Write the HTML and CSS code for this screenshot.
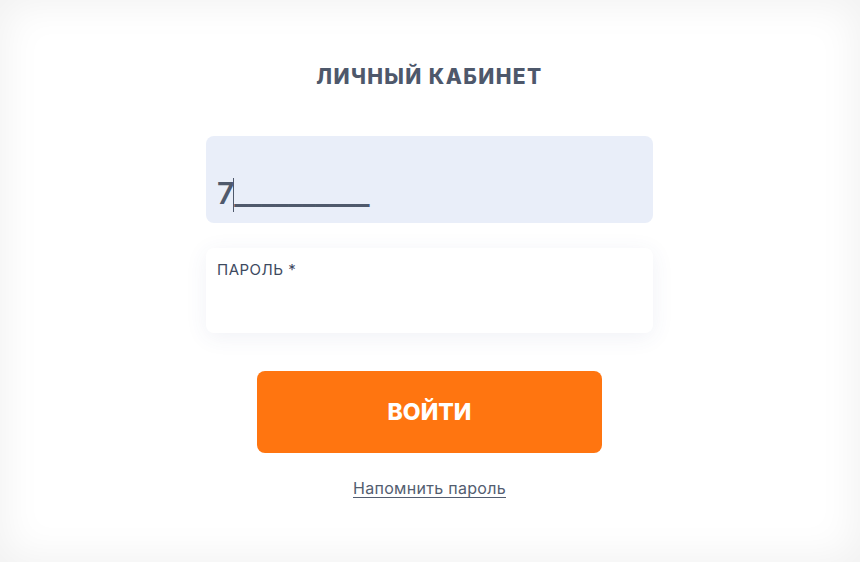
FILE: index.html
```html
<!DOCTYPE html>
<html lang="ru">
<head>
<meta charset="utf-8">
<title>Личный кабинет</title>
<link rel="stylesheet" href="styles.css">
</head>
<body>
<div class="page">
  <form class="card">
    <h1 class="title">ЛИЧНЫЙ КАБИНЕТ</h1>
    <div class="field field-phone">
      <span class="phone-value">7<span class="caret"></span><span class="mask">__________</span></span>
    </div>
    <div class="field field-pass">
      <span class="label">ПАРОЛЬ *</span>
    </div>
    <button type="button" class="btn">ВОЙТИ</button>
    <a class="link" href="#">Напомнить пароль</a>
  </form>
</div>
</body>
</html>
```
FILE: styles.css
```css
* { box-sizing: border-box; }
html, body { margin: 0; padding: 0; }
body {
  font-family: Inter, "Noto Sans", sans-serif;
  background: #ffffff;
}
.page {
  width: 860px;
  height: 562px;
  overflow: hidden;
  box-shadow: inset 0 0 40px 4px rgba(0, 0, 0, 0.06);
  background: #fff;
}
.card {
  display: flex;
  flex-direction: column;
  align-items: center;
  padding-top: 64px;
  padding-right: 1px;
  margin: 0;
}
.title {
  margin: 0;
  font-size: 21px;
  line-height: 26px;
  font-weight: 800;
  letter-spacing: 1.4px;
  color: #4e586b;
}
.field {
  width: 447px;
  border-radius: 8px;
  padding-left: 11px;
}
.field-phone {
  margin-top: 46px;
  height: 87px;
  background: #e9eef9;
  padding-top: 40px;
}
.phone-value {
  font-size: 30px;
  line-height: 34px;
  font-weight: 600;
  color: #4f596c;
  white-space: nowrap;
}
.caret {
  display: inline-block;
  width: 1px;
  height: 34px;
  background: #4f596c;
  vertical-align: -8px;
  margin-left: -1px;
}
.mask {
  letter-spacing: -0.6px;
}
.field-pass {
  margin-top: 25px;
  height: 85px;
  background: #fff;
  padding-top: 13px;
  box-shadow: 0 4px 22px rgba(60, 80, 140, 0.08);
}
.label {
  display: block;
  font-size: 15px;
  line-height: 18px;
  color: #3e4a5f;
  letter-spacing: 0.5px;
}
.btn {
  margin-top: 38px;
  width: 345px;
  height: 82px;
  border: 0;
  border-radius: 8px;
  background: #ff7510;
  color: #fff;
  font-family: Inter, "Noto Sans", sans-serif;
  font-size: 23px;
  font-weight: 800;
  letter-spacing: 0;
  padding: 0;
}
.link {
  margin-top: 25px;
  font-size: 16px;
  line-height: 20px;
  color: #535d70;
  letter-spacing: 0.3px;
  text-decoration: underline;
  text-underline-offset: 3px;
}
```
